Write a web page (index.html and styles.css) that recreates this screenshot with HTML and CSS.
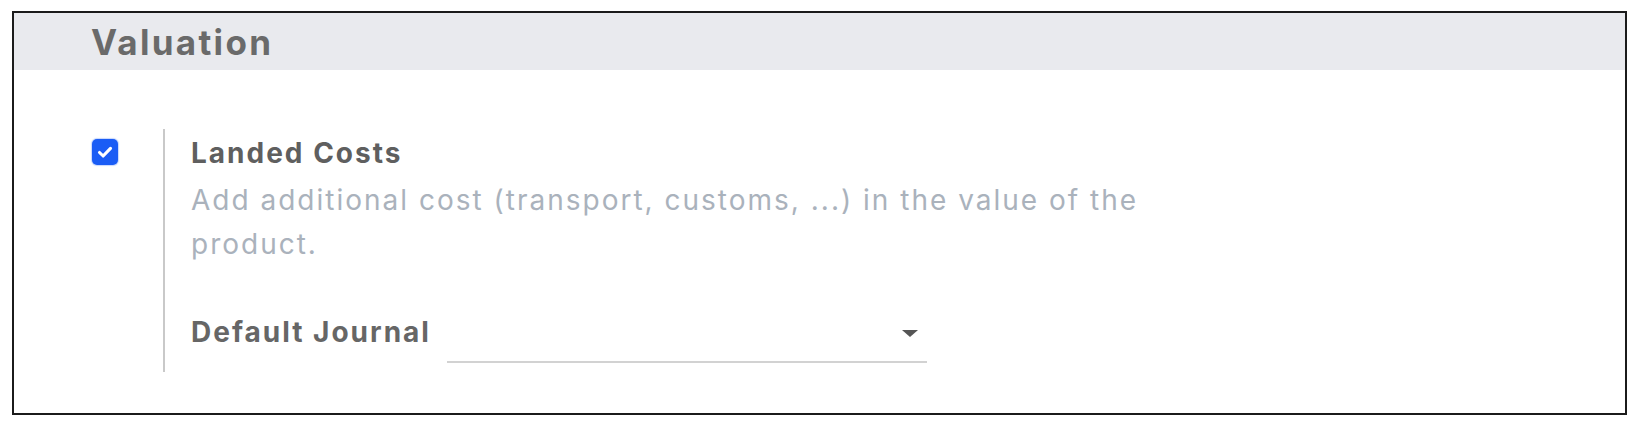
FILE: index.html
```html
<!DOCTYPE html>
<html>
<head>
<meta charset="utf-8">
<link rel="stylesheet" href="styles.css">
</head>
<body>
<div class="card">
  <div class="card-head"><h2 class="card-title">Valuation</h2></div>
  <div class="card-body">
    <div class="setting">
      <div class="setting-check">
        <span class="checkbox" role="checkbox" aria-checked="true">
          <svg viewBox="0 0 16 16" width="20" height="20"><path d="M3.6 8.4l2.9 2.8 5.9-6.1" fill="none" stroke="#fff" stroke-width="2.5" stroke-linecap="round" stroke-linejoin="round"/></svg>
        </span>
      </div>
      <div class="setting-main">
        <div class="setting-label">Landed Costs</div>
        <div class="setting-desc">Add additional cost (transport, customs, ...) in the value of the product.</div>
        <div class="field-row">
          <span class="field-label">Default Journal</span>
          <span class="select">
            <span class="caret"></span>
          </span>
        </div>
      </div>
    </div>
  </div>
</div>
</body>
</html>
```
FILE: styles.css
```css
* { box-sizing: border-box; }
html, body { margin: 0; padding: 0; background: #ffffff; }
body {
  font-family: "Inter", "Liberation Sans", sans-serif;
  width: 1642px;
  height: 422px;
  overflow: hidden;
}
.card {
  margin: 11px 0 0 12px;
  width: 1615px;
  height: 404px;
  border: 2px solid #1b1b1b;
  background: #fff;
}
.card-head {
  height: 57px;
  background: #e9eaee;
  display: flex;
  align-items: center;
  padding-left: 77px;
}
.card-title {
  margin: 0;
  font-size: 35px;
  font-weight: 700;
  color: #6a6a6a;
  letter-spacing: 2.3px;
}
.card-body {
  padding: 59px 0 0 78px;
}
.setting {
  display: flex;
}
.setting-check {
  width: 71px;
  padding-top: 10px;
}
.checkbox {
  width: 26px;
  height: 26px;
  border-radius: 5px;
  background: #1a5cf5;
  box-shadow: 0 0 1px 1px rgba(26, 92, 245, 0.25);
  display: flex;
  align-items: center;
  justify-content: center;
}
.setting-main {
  border-left: 2px solid #c9c9c9;
  padding: 0 0 18px 26px;
  width: 1000px;
}
.setting-label {
  font-size: 28px;
  font-weight: 700;
  color: #5f5f5f;
  line-height: 44px;
  padding-top: 2px;
  letter-spacing: 2px;
}
.setting-desc {
  font-size: 28px;
  color: #aab2bc;
  line-height: 44px;
  max-width: 980px;
  margin-top: 3px;
  letter-spacing: 2px;
}
.field-row {
  display: flex;
  align-items: center;
  margin-top: 44px;
}
.field-label {
  font-size: 28px;
  font-weight: 700;
  color: #666;
  width: 256px;
  letter-spacing: 2px;
}
.select {
  width: 480px;
  height: 44px;
  border-bottom: 2px solid #d2d2d2;
  display: flex;
  justify-content: flex-end;
  align-items: flex-start;
  padding: 11px 9px 0 0;
  position: relative;
  top: 9px;
}
.caret {
  width: 0;
  height: 0;
  border-left: 8px solid transparent;
  border-right: 8px solid transparent;
  border-top: 7px solid #555;
}
```
